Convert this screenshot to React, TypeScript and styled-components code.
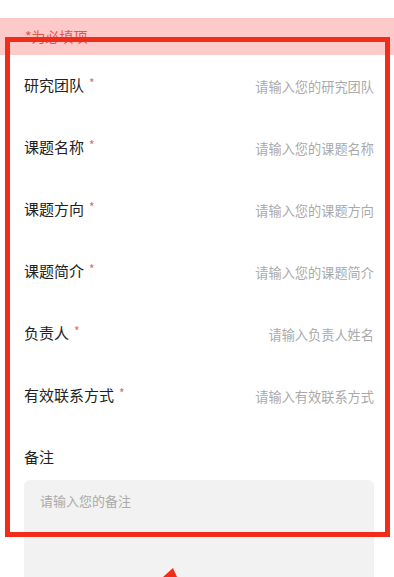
import React from "react";
import styled, { createGlobalStyle } from "styled-components";

const Global = createGlobalStyle`
  html, body { margin: 0; padding: 0; background: #ffffff; }
  body { font-family: "Noto Sans CJK SC", "Noto Sans", sans-serif; }
`;

const Page = styled.div`
  position: relative;
  width: 394px;
  height: 577px;
  overflow: hidden;
  background: #ffffff;
  padding-top: 18px;
  box-sizing: border-box;
`;

const Notice = styled.div`
  height: 37px;
  background: #fdc9c9;
  color: #e4554c;
  font-size: 14px;
  line-height: 37px;
  padding-left: 25px;
`;

const Form = styled.div`
  display: flex;
  flex-direction: column;
  padding: 0 20px 0 24px;
`;

const Row = styled.div`
  height: 62px;
  display: flex;
  align-items: center;
  justify-content: space-between;
`;

const Label = styled.div`
  font-size: 15px;
  color: #222222;
  display: flex;
  align-items: center;
  margin-bottom: 3px;
`;

const Star = styled.span`
  color: #e8685e;
  font-size: 12px;
  margin-left: 5px;
  position: relative;
  top: -2px;
`;

const Placeholder = styled.div`
  font-size: 13.2px;
  color: #aaaaaa;
`;

const RemarkBlock = styled.div`
  display: flex;
  flex-direction: column;
  gap: 12px;
  padding-top: 19px;
`;

const RemarkLabel = styled.div`
  font-size: 15px;
  line-height: 22px;
  color: #222222;
`;

const TextArea = styled.div`
  background: #f2f2f2;
  border-radius: 6px;
  height: 140px;
  padding: 11px 16px;
  box-sizing: border-box;
  font-size: 13px;
  color: #aaaaaa;
`;

const Highlight = styled.div`
  position: absolute;
  left: 5px;
  top: 37px;
  width: 385px;
  height: 500px;
  border: 5.5px solid #ef2d1a;
  box-sizing: border-box;
  pointer-events: none;
`;

const Arrow = styled.svg`
  position: absolute;
  left: 150px;
  top: 555px;
`;

const fields = [
  { label: "研究团队", ph: "请输入您的研究团队" },
  { label: "课题名称", ph: "请输入您的课题名称" },
  { label: "课题方向", ph: "请输入您的课题方向" },
  { label: "课题简介", ph: "请输入您的课题简介" },
  { label: "负责人", ph: "请输入负责人姓名" },
  { label: "有效联系方式", ph: "请输入有效联系方式" },
];

export default function App() {
  return (
    <>
      <Global />
      <Page>
        <Notice>*为必填项</Notice>
        <Form>
          {fields.map((f) => (
            <Row key={f.label}>
              <Label>
                {f.label}
                <Star>*</Star>
              </Label>
              <Placeholder>{f.ph}</Placeholder>
            </Row>
          ))}
          <RemarkBlock>
            <RemarkLabel>备注</RemarkLabel>
            <TextArea>请输入您的备注</TextArea>
          </RemarkBlock>
        </Form>
        <Highlight />
        <Arrow width="50" height="22" viewBox="0 0 50 22">
          <polygon points="23,13 13,22 27,22" fill="#ef2d1a" />
        </Arrow>
      </Page>
    </>
  );
}
